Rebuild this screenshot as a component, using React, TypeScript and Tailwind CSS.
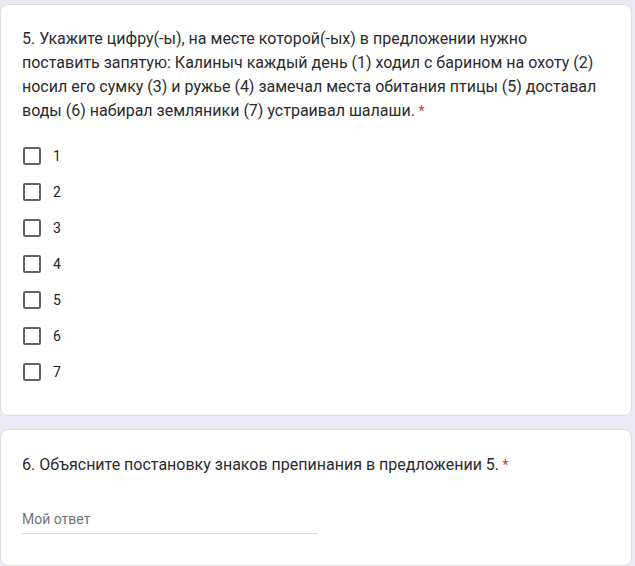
import React from 'react';

const options = ['1', '2', '3', '4', '5', '6', '7'];

const Required: React.FC = () => <span className="text-[14px] text-[#d93025]"> *</span>;

const CheckRow: React.FC<{ label: string }> = ({ label }) => (
    <label className="flex h-9 items-center">
        <span className="ml-[1px] h-[18px] w-[18px] rounded-[2px] border-2 border-[#5f6368] bg-white" />
        <span className="ml-[12px] text-[14px] text-[#202124]">{label}</span>
    </label>
);

const App: React.FC = () => {
    return (
        <div className="min-h-[566px] bg-[#ebe9f5] pt-[4px] pr-[3px] font-['Roboto',sans-serif]">
            <div className="rounded-lg border border-[#dadce0] bg-white pl-[21px] pr-[20px] pt-[22px] pb-[25px]">
                <div className="text-[16px] leading-[24px] text-[#2a2b2e]">
                    5. Укажите цифру(-ы), на месте которой(-ых) в предложении нужно<br />
                    поставить запятую: Калиныч каждый день (1) ходил с барином на охоту (2)<br />
                    носил его сумку (3) и ружье (4) замечал места обитания птицы (5) доставал<br />
                    воды (6) набирал земляники (7) устраивал шалаши.<Required />
                </div>
                <div className="mt-[15px] flex flex-col">
                    {options.map(o => <CheckRow key={o} label={o} />)}
                </div>
            </div>
            <div className="mt-[13px] rounded-lg border border-[#dadce0] bg-white pl-[21px] pr-[20px] pt-[23px] pb-[31px]">
                <div className="text-[16px] leading-[24px] text-[#2a2b2e]">
                    6. Объясните постановку знаков препинания в предложении 5.<Required />
                </div>
                <div className="mt-[32px] w-[296px] border-b border-[#dadce0] pb-[4px]">
                    <div className="text-[14px] leading-[20px] text-[#70757a]">Мой ответ</div>
                </div>
            </div>
        </div>
    );
};

export default App;
